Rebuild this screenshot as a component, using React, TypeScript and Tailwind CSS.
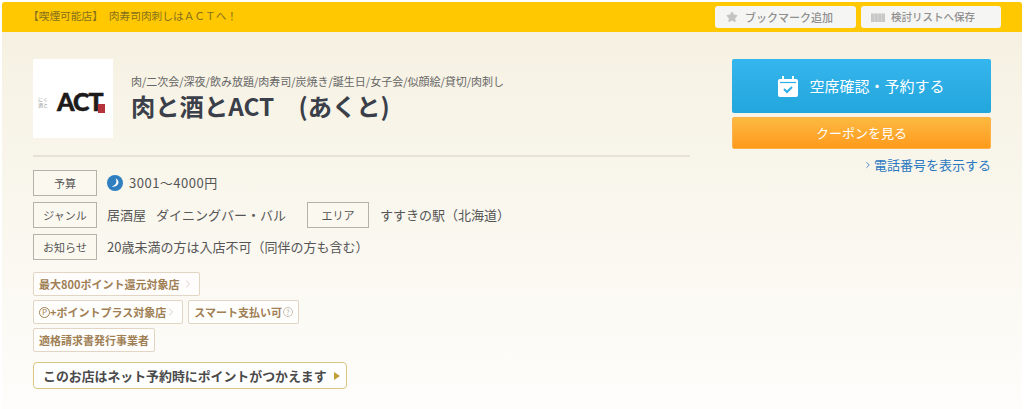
import { Star, ChevronRight } from "lucide-react";

const font = "font-['Noto_Sans_CJK_JP','Noto_Sans',sans-serif]";

function Label({ children, w = "w-[64px]" }: { children: string; w?: string }) {
  return (
    <div className={`${w} h-[26px] shrink-0 flex items-center justify-center border border-[#b5b2aa] bg-[#fbf8f0] text-[11px] text-[#555]`}>
      {children}
    </div>
  );
}

function Badge({ children }: { children: React.ReactNode }) {
  return (
    <div className="h-[24px] inline-flex items-center px-[5px] bg-white/70 border border-[#e3d5c3] rounded-[2px] text-[11px] font-bold text-[#a07f55] whitespace-nowrap">
      {children}
    </div>
  );
}

function Logo() {
  return (
    <div className="w-[80px] h-[79px] bg-white flex items-center pl-[5px] pt-[6px]">
      <div className="flex flex-col text-[5px] leading-[6px] text-[#999] w-[10px] shrink-0">
        <span>にく</span>
        <span>酒と</span>
      </div>
      <span className="ml-[9px] font-['Lato',sans-serif] font-black text-[25px] leading-none tracking-[-1px] text-[#1c1a1a] [-webkit-text-stroke:0.5px_#1c1a1a]">ACT</span>
      <span className="ml-[-5px] w-[7px] h-[9px] bg-[#b5343c] mt-[14px]" />
    </div>
  );
}

export default function App() {
  return (
    <div className={`${font} w-[1024px] h-[409px] overflow-hidden bg-white px-[2px] pt-[2px]`}>
      <div className="h-[407px] flex flex-col bg-gradient-to-b from-[#f5f0e0] to-[#fefdfb]">
        <div className="h-[30px] shrink-0 flex items-center justify-between bg-[#ffc800] rounded-t-[3px] pl-[26px] pr-[21px]">
          <p className="text-[10.7px] text-[#86701f] flex gap-[6px] pb-[2px]">
            <span>【喫煙可能店】</span>
            <span>肉寿司肉刺しはＡＣＴへ！</span>
          </p>
          <div className="flex gap-[5px]">
            <div className="w-[141px] h-[22px] rounded-[3px] bg-[#f5f5f3] flex items-center pl-[11px] gap-[7px] text-[11px] font-medium text-[#8f8f8f]">
              <Star className="w-[12px] h-[12px] fill-[#c4c4c4] text-[#c4c4c4]" />
              ブックマーク追加
            </div>
            <div className="w-[140px] h-[22px] rounded-[3px] bg-[#f5f5f3] flex items-center pl-[10px] gap-[6px] text-[10.5px] font-medium text-[#8f8f8f]">
              <svg width="14" height="10" viewBox="0 0 14 10">
                <path d="M0 1.5h14V10H0z" fill="#c8c8c8" />
                <path d="M3.5 1.5v8.5M7 1.5v8.5M10.5 1.5v8.5" stroke="#dadada" strokeWidth="0.7" />
              </svg>
              検討リストへ保存
            </div>
          </div>
        </div>

        <div className="flex pl-[31px] pt-[27px]">
          <div className="w-[657px]">
            <div className="flex gap-[18px] pb-[17px] border-b-2 border-[#e6e2d8]">
              <Logo />
              <div className="pt-[13px]">
                <p className="text-[11px] leading-[18px] text-[#666]">
                  肉/二次会/深夜/飲み放題/肉寿司/炭焼き/誕生日/女子会/似顔絵/貸切/肉刺し
                </p>
                <h1 className="text-[24.3px] leading-[32px] font-bold text-[#3a3f4a]">肉と酒とACT　(あくと)</h1>
              </div>
            </div>

            <div className="mt-[13px] flex flex-col gap-[6px] text-[13px] text-[#555]">
              <div className="flex items-center">
                <Label>予算</Label>
                <svg className="ml-[10px]" width="16" height="16" viewBox="0 0 16 16">
                  <circle cx="8" cy="8" r="8" fill="#2f7fc0" />
                  <path d="M8.5 3.5c1.8 2.600 1 6.600-3.600 8 3.800 1 6.600-1.400 6.600-4.400 0-1.600-1.200-3-3-3.600z" fill="#fff" />
                </svg>
                <span className="ml-[6px] tracking-[0.5px]">3001～4000円</span>
              </div>
              <div className="flex items-center">
                <Label>ジャンル</Label>
                <span className="ml-[10px] w-[200px] flex gap-[10px]">
                  <span>居酒屋</span>
                  <span>ダイニングバー・バル</span>
                </span>
                <Label w="w-[62px]">エリア</Label>
                <span className="ml-[11px]">すすきの駅（北海道）</span>
              </div>
              <div className="flex items-center">
                <Label>お知らせ</Label>
                <span className="ml-[10px]">20歳未満の方は入店不可（同伴の方も含む）</span>
              </div>
            </div>

            <div className="mt-[12px] flex flex-col gap-[4px] items-start">
              <Badge>
                最大800ポイント還元対象店
                <ChevronRight className="w-[12px] h-[12px] ml-[3px] text-[#c9c2b8]" strokeWidth={1.5} />
              </Badge>
              <div className="flex gap-[5px]">
                <Badge>
                  <span className="w-[11px] h-[11px] rounded-full border border-[#a07f55] flex items-center justify-center text-[8px] font-normal">P</span>
                  +ポイントプラス対象店
                  <ChevronRight className="w-[12px] h-[12px] -ml-px text-[#c9c2b8]" strokeWidth={1.5} />
                </Badge>
                <Badge>
                  スマート支払い可
                  <span className="ml-[1px] w-[10px] h-[10px] rounded-full border border-[#c9c2b8] flex items-center justify-center text-[7px] font-normal text-[#b5ada0]">?</span>
                </Badge>
              </div>
              <Badge>適格請求書発行事業者</Badge>
            </div>

            <div className="mt-[10px] w-[314px] h-[27px] flex items-center pl-[9px] bg-white border border-[#d9c680] rounded-[4px] text-[12.9px] font-bold text-[#4a4a4a] whitespace-nowrap">
              このお店はネット予約時にポイントがつかえます
              <span className="ml-[7px] w-0 h-0 border-y-[4px] border-y-transparent border-l-[6px] border-l-[#bfa038]" />
            </div>
          </div>

          <div className="ml-[42px] w-[259px]">
            <div className="h-[54px] rounded-[2px] bg-gradient-to-b from-[#35b6ee] to-[#22a6dc] flex items-center justify-center gap-[11px] text-white text-[15px]">
              <svg width="20" height="21" viewBox="0 0 20 21">
                <path d="M2 3h16a2 2 0 0 1 2 2v14a2 2 0 0 1-2 2H2a2 2 0 0 1-2-2V5a2 2 0 0 1 2-2z" fill="#fff" />
                <path d="M2 6.5h16" stroke="#2cafe6" strokeWidth="1.2" />
                <rect x="4" y="0" width="2" height="5" fill="#fff" />
                <rect x="14" y="0" width="2" height="5" fill="#fff" />
                <path d="M6 13l3 3 5-5" fill="none" stroke="#2cafe6" strokeWidth="2" />
              </svg>
              空席確認・予約する
            </div>
            <div className="mt-[4px] h-[32px] rounded-[2px] border border-[#fdb14a] bg-gradient-to-b from-[#fcb93f] to-[#fe9a1a] flex items-center justify-center text-white text-[13px]">
              クーポンを見る
            </div>
            <div className="mt-[6px] flex items-center justify-end text-[13px] text-[#2a78c0]">
              <ChevronRight className="w-[10px] h-[10px] mr-[1px]" strokeWidth={2} />
              電話番号を表示する
            </div>
          </div>
        </div>
      </div>
    </div>
  );
}
